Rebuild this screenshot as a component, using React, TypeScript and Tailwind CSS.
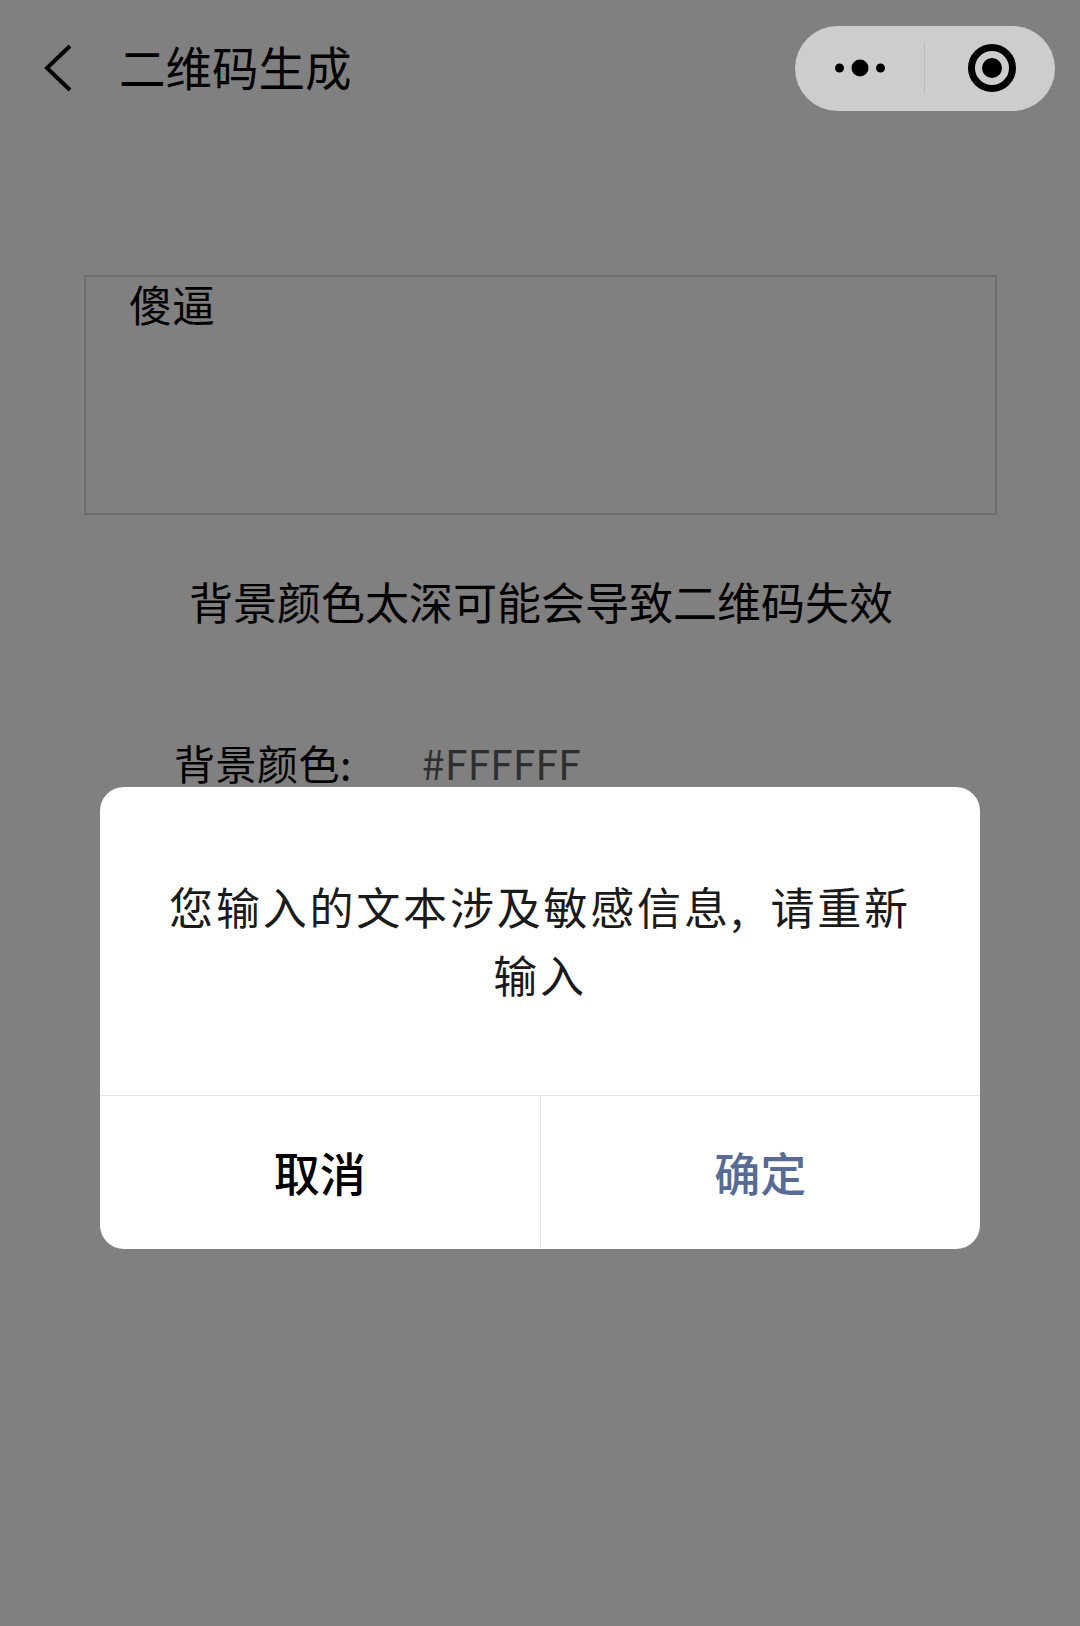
const CJK = "font-['Noto_Sans_CJK_SC','Noto_Sans',sans-serif]";

// Capsule with the "more" dots and the close target, as on a mini-program nav bar.
function Capsule() {
  return (
    <div className="flex h-[85px] w-[260px] items-center rounded-[43px] bg-[#cdcdcd]">
      <div className="flex h-[52px] w-[130px] items-center justify-center border-r border-[#bcbcbc]">
        <svg width="50" height="20" viewBox="0 0 50 20" fill="#000">
          <circle cx="4.5" cy="10" r="4.5" />
          <circle cx="25" cy="10" r="8.5" />
          <circle cx="45.5" cy="10" r="4.5" />
        </svg>
      </div>
      <div className="flex flex-1 items-center justify-center pl-[3px]">
        <svg width="50" height="50" viewBox="0 0 50 50">
          <circle cx="25" cy="25" r="20.5" fill="none" stroke="#000" strokeWidth="7" />
          <circle cx="25" cy="25" r="10" fill="#000" />
        </svg>
      </div>
    </div>
  );
}

export default function App() {
  return (
    <div className={`relative h-[1626px] w-[1080px] overflow-hidden bg-[#808080] ${CJK}`}>
      <header className="flex h-[136px] items-center">
        <svg className="ml-[43px]" width="30" height="50" viewBox="0 0 30 50" fill="none">
          <path d="M27 3 L4 25 L27 47" stroke="#000" strokeWidth="4" />
        </svg>
        <h1 className="ml-[46px] pb-[4px] text-[46.5px] leading-none font-normal text-black">二维码生成</h1>
        <div className="ml-auto mr-[25px]">
          <Capsule />
        </div>
      </header>

      <main className="pl-[84px] pr-[82px] pt-[139px]">
        <div className="h-[240px] w-[913px] border-2 border-[#6e6e6e] pl-[43px] text-[43px] leading-[52px] text-black">
          傻逼
        </div>
        <p className="mt-[56px] text-center text-[44px] leading-[60px] text-black">
          背景颜色太深可能会导致二维码失效
        </p>
        <div className="mt-[101px] flex items-center pl-[90px] text-[41px] leading-[60px]">
          <span className="w-[248px] tracking-[0.5px] text-black">背景颜色:</span>
          <span className="text-[#2e2e2e]">#FFFFFF</span>
        </div>
      </main>

      {/* Confirmation dialog above the dimmed page */}
      <div className="absolute left-[100px] top-[787px] flex h-[462px] w-[880px] flex-col overflow-hidden rounded-[24px] bg-white">
        <div className="flex h-[308px] items-center justify-center px-[68px] pb-[2px] text-center text-[44px] leading-[68px] tracking-[2.8px] text-[#1a1a1a]">
          您输入的文本涉及敏感信息,&ensp;请重新输入
        </div>
        <div className="flex flex-1 border-t border-[#e3e3e3] pb-[2px]">
          <button className="flex-1 border-r border-[#e3e3e3] text-[46px] font-medium text-black">取消</button>
          <button className="flex-1 text-[46px] font-medium text-[#576b95]">确定</button>
        </div>
      </div>
    </div>
  );
}
